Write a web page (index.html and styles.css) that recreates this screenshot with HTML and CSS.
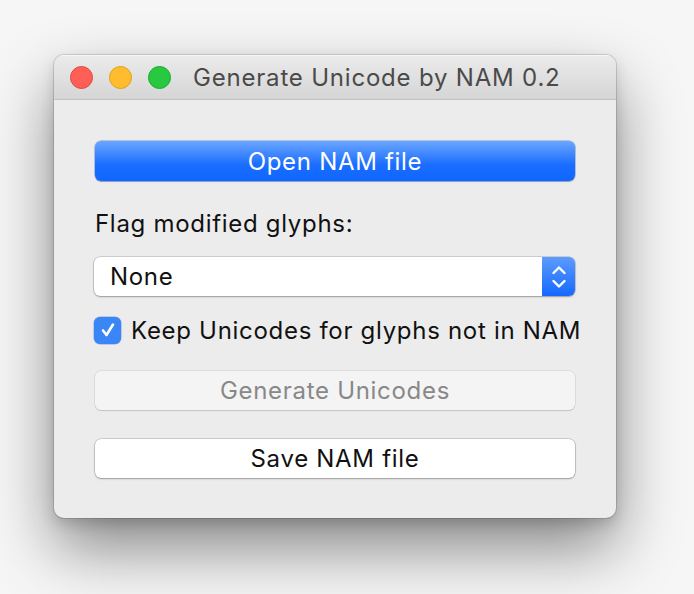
FILE: index.html
```html
<!DOCTYPE html>
<html>
<head>
<meta charset="utf-8">
<link rel="stylesheet" href="styles.css">
</head>
<body>
<div class="window">
  <div class="titlebar">
    <div class="lights">
      <span class="light red"></span>
      <span class="light yellow"></span>
      <span class="light green"></span>
    </div>
    <div class="title">Generate Unicode by NAM 0.2</div>
  </div>
  <div class="content">
    <div class="btn btn-primary">Open NAM file</div>
    <div class="label">Flag modified glyphs:</div>
    <div class="select">
      <div class="select-value">None</div>
      <div class="select-arrows">
        <svg width="16" height="26" viewBox="0 0 16 26">
          <path d="M2.5 9 L8 3.5 L13.5 9" fill="none" stroke="#fff" stroke-width="2.4" stroke-linecap="round" stroke-linejoin="round"/>
          <path d="M2.5 17 L8 22.5 L13.5 17" fill="none" stroke="#fff" stroke-width="2.4" stroke-linecap="round" stroke-linejoin="round"/>
        </svg>
      </div>
    </div>
    <div class="check-row">
      <span class="checkbox">
        <svg width="18" height="18" viewBox="0 0 18 18">
          <path d="M4 9.5 L7.5 14 L14 3.5" fill="none" stroke="#fff" stroke-width="2.6" stroke-linecap="round" stroke-linejoin="round"/>
        </svg>
      </span>
      <span class="check-label">Keep Unicodes for glyphs not in NAM</span>
    </div>
    <div class="btn btn-disabled">Generate Unicodes</div>
    <div class="btn btn-default">Save NAM file</div>
  </div>
</div>
</body>
</html>
```

FILE: styles.css
```css
html, body {
  margin: 0;
  padding: 0;
}
body {
  width: 694px;
  height: 594px;
  overflow: hidden;
  background: #f6f6f6;
  font-family: Inter, "Noto Sans", sans-serif;
  padding-top: 55px;
  box-sizing: border-box;
}
.window {
  margin-left: 54px;
  width: 562px;
  height: 463px;
  box-sizing: border-box;
  border-radius: 10px;
  background: #ececec;
  box-shadow: 0 0 0 1px rgba(0,0,0,0.13), 0 30px 64px rgba(0,0,0,0.46), 0 6px 14px rgba(0,0,0,0.14);
  display: flex;
  flex-direction: column;
  overflow: hidden;
}
.titlebar {
  height: 44px;
  flex: none;
  background: linear-gradient(#ebebeb, #d5d5d5);
  border-bottom: 1px solid #c2c2c2;
  display: flex;
  align-items: center;
  padding-left: 16px;
  box-shadow: inset 0 1px 0 rgba(255,255,255,0.6);
}
.lights {
  display: flex;
  gap: 16px;
}
.light {
  width: 23px;
  height: 23px;
  border-radius: 50%;
  box-sizing: border-box;
}
.red { background: #ff5f57; border: 1px solid #e2463f; }
.yellow { background: #febc2e; border: 1px solid #e1a116; }
.green { background: #28c840; border: 1px solid #14ae2a; }
.title {
  margin-left: 22px;
  font-size: 24px;
  color: #4a4a4a;
  letter-spacing: 0.8px;
}
.content {
  padding: 41px 41px 0 41px;
  display: flex;
  flex-direction: column;
}
.btn {
  height: 40px;
  border-radius: 6px;
  display: flex;
  align-items: center;
  justify-content: center;
  font-size: 24px;
  letter-spacing: 0.7px;
  box-sizing: border-box;
}
.btn-primary {
  background: linear-gradient(#6ba6ff, #1a6dff 60%, #0f66ff);
  color: #fff;
  box-shadow: 0 0 0 0.5px rgba(0,60,200,0.5), 0 1px 1px rgba(0,0,0,0.2);
}
.label {
  margin-top: 28px;
  font-size: 24px;
  letter-spacing: 0.7px;
  line-height: 30px;
  color: #111;
}
.select {
  margin-top: 18px;
  height: 39px;
  border-radius: 6px;
  background: #fff;
  display: flex;
  overflow: hidden;
  box-shadow: 0 0 0 0.5px rgba(0,0,0,0.25), 0 1px 2px rgba(0,0,0,0.25);
  margin-left: -1px;
}
.select-value {
  flex: 1;
  padding-left: 16px;
  display: flex;
  align-items: center;
  font-size: 24px;
  letter-spacing: 0.7px;
  color: #111;
}
.select-arrows {
  width: 33px;
  background: linear-gradient(#5d9bff, #1469ff);
  display: flex;
  align-items: center;
  justify-content: center;
}
.select-arrows svg { display: block; }
.check-row {
  margin-top: 19px;
  display: flex;
  align-items: center;
  height: 30px;
  margin-left: -1px;
}
.checkbox {
  flex: none;
  width: 27px;
  height: 27px;
  border-radius: 6px;
  background: #3a86f7;
  display: flex;
  align-items: center;
  justify-content: center;
  box-shadow: 0 0 0 0.5px rgba(0,60,200,0.4);
}
.checkbox svg { display: block; }
.check-label {
  margin-left: 10px;
  font-size: 24px;
  letter-spacing: 0.7px;
  color: #111;
  white-space: nowrap;
}
.btn-disabled {
  margin-top: 26px;
  height: 39px;
  background: #f4f4f4;
  color: #888;
  box-shadow: 0 0 0 0.5px rgba(0,0,0,0.12), 0 1px 1px rgba(0,0,0,0.12);
}
.btn-default {
  margin-top: 29px;
  height: 39px;
  background: #fff;
  color: #111;
  box-shadow: 0 0 0 0.5px rgba(0,0,0,0.25), 0 1px 2px rgba(0,0,0,0.25);
}
```
